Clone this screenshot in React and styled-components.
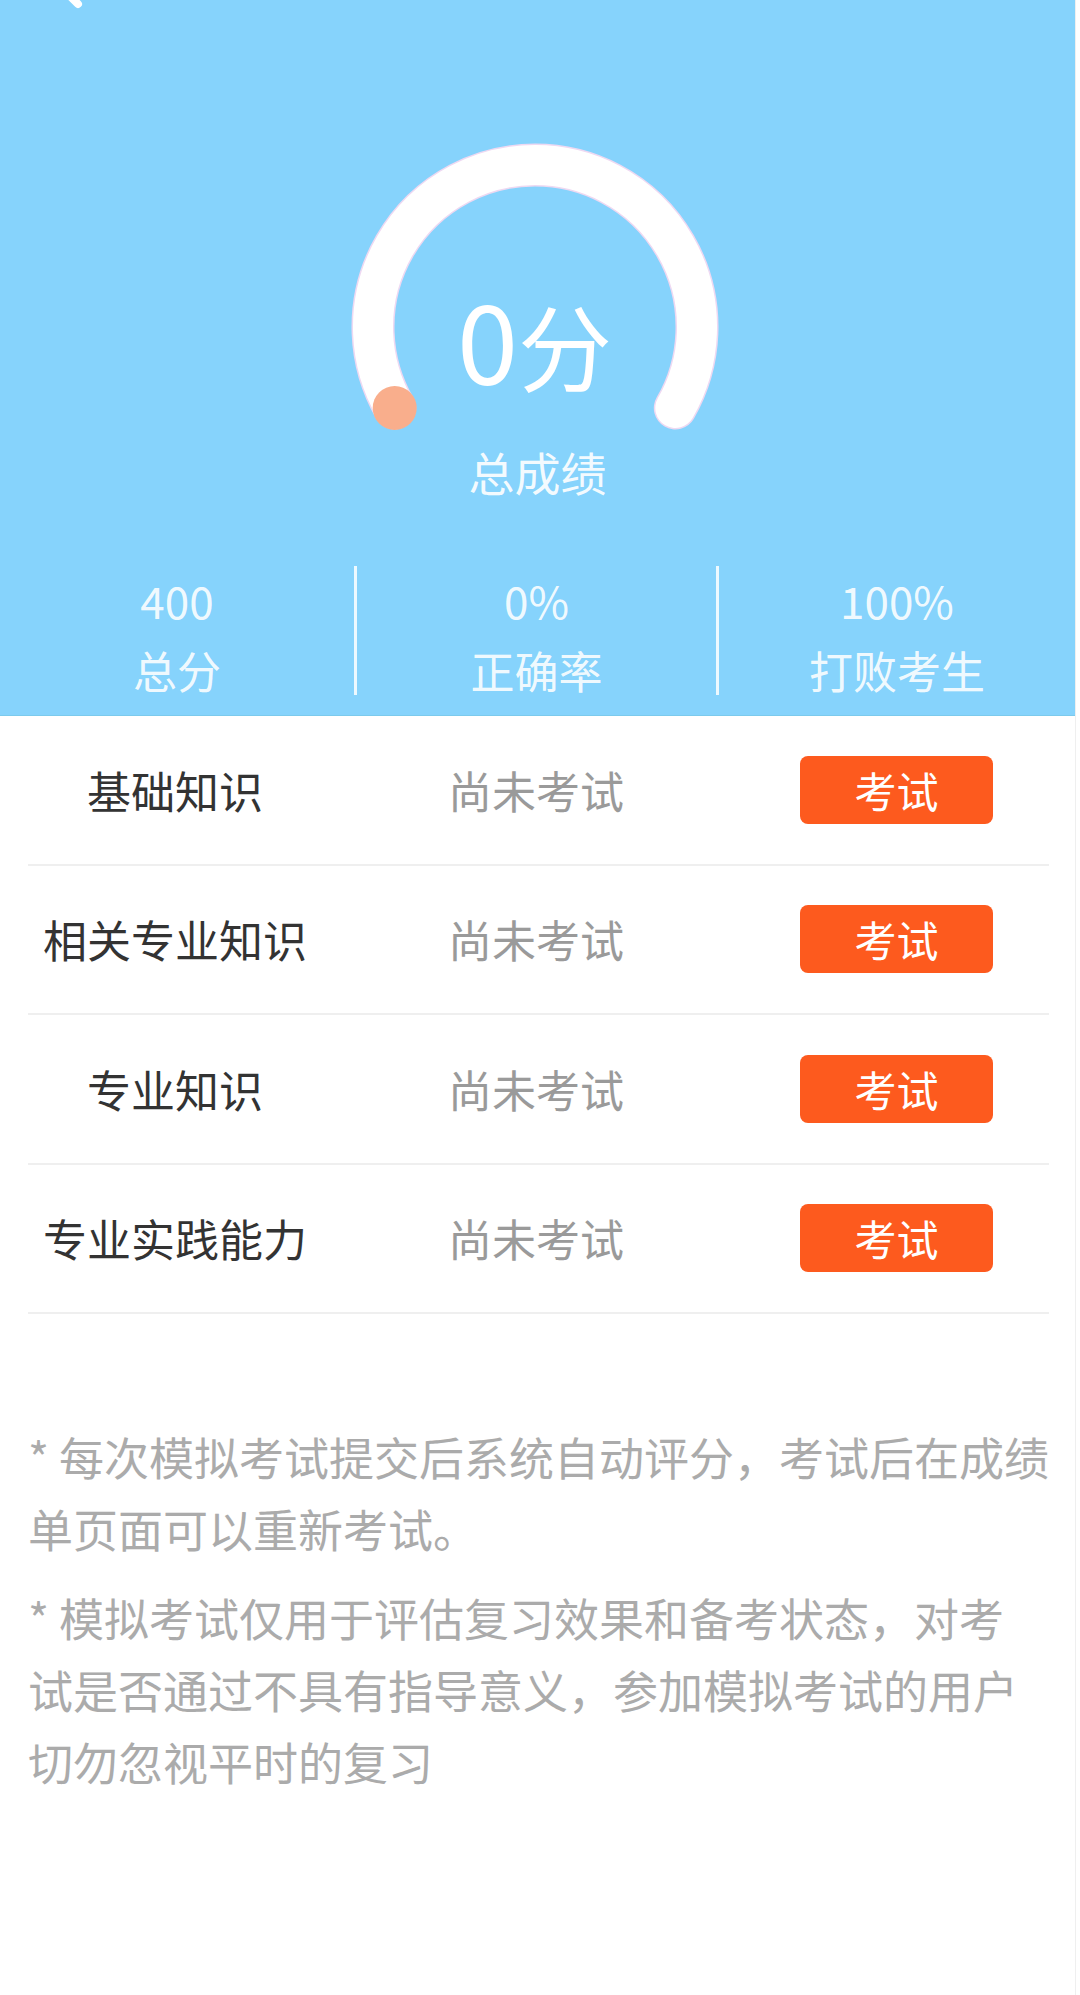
import React from "react";
import styled, { createGlobalStyle } from "styled-components";
import { ChevronLeft } from "lucide-react";

const GlobalStyle = createGlobalStyle`
  * { box-sizing: border-box; }
  body {
    margin: 0;
    background: #ffffff;
    font-family: "Noto Sans CJK SC", "Noto Sans", sans-serif;
  }
`;

const subjects = [
  { name: "基础知识", status: "尚未考试" },
  { name: "相关专业知识", status: "尚未考试" },
  { name: "专业知识", status: "尚未考试" },
  { name: "专业实践能力", status: "尚未考试" },
];

const stats = [
  { value: "400", label: "总分" },
  { value: "0%", label: "正确率" },
  { value: "100%", label: "打败考生" },
];

function Gauge() {
  const cx = 190;
  const cy = 190;
  const r = 162;
  const a0 = (150 * Math.PI) / 180;
  const a1 = (30 * Math.PI) / 180;
  const sx = cx + r * Math.cos(a0);
  const sy = cy + r * Math.sin(a0);
  const ex = cx + r * Math.cos(a1);
  const ey = cy + r * Math.sin(a1);
  const d = `M ${sx} ${sy} A ${r} ${r} 0 1 1 ${ex} ${ey}`;

  return (
    <svg width="380" height="295" viewBox="0 0 380 295">
      <path d={d} fill="none" stroke="#eed9f2" strokeWidth="43" strokeLinecap="round" />
      <path d={d} fill="none" stroke="#ffffff" strokeWidth="40" strokeLinecap="round" />
      <circle cx={sx} cy={sy} r="22" fill="#f9ae8c" />
    </svg>
  );
}

function App() {
  return (
    <>
      <GlobalStyle />
      <Page>
        <Hero>
          <TopBar>
            <ChevronLeft size={64} color="#ffffff" strokeWidth={3} />
          </TopBar>
          <GaugeWrap>
            <Gauge />
            <Score>
              <ScoreNum>0</ScoreNum>
              <ScoreUnit>分</ScoreUnit>
            </Score>
          </GaugeWrap>
          <ScoreLabel>总成绩</ScoreLabel>
          <StatsRow>
            {stats.map((s, i) => (
              <StatCol key={s.label} $first={i === 0}>
                <StatValue>{s.value}</StatValue>
                <StatLabel>{s.label}</StatLabel>
              </StatCol>
            ))}
          </StatsRow>
        </Hero>

        <SubjectList>
          {subjects.map((s) => (
            <SubjectRow key={s.name}>
              <SubjectName>{s.name}</SubjectName>
              <SubjectStatus>{s.status}</SubjectStatus>
              <ButtonCell>
                <ExamButton>考试</ExamButton>
              </ButtonCell>
            </SubjectRow>
          ))}
        </SubjectList>

        <Notes>
          <Note>
            * 每次模拟考试提交后系统自动评分，考试后在成绩
            <br />
            单页面可以重新考试。
          </Note>
          <Note>
            * 模拟考试仅用于评估复习效果和备考状态，对考
            <br />
            试是否通过不具有指导意义，参加模拟考试的用户
            <br />
            切勿忽视平时的复习
          </Note>
        </Notes>
      </Page>
    </>
  );
}

const Page = styled.div`
  width: 1076px;
  min-height: 1995px;
  background: #ffffff;
  border-right: 1px solid #efefef;
  overflow: hidden;
`;

const Hero = styled.div`
  height: 716px;
  background: #86d3fc;
  border-bottom: 1px solid #7ccaec;
  display: flex;
  flex-direction: column;
  align-items: center;
`;

const TopBar = styled.div`
  align-self: stretch;
  height: 100px;
  margin-top: -62px;
  padding-left: 38px;
  display: flex;
  align-items: center;
`;

const GaugeWrap = styled.div`
  position: relative;
  margin-top: 99px;
  width: 380px;
  height: 295px;
  margin-left: -6px;
  svg {
    display: block;
  }
`;

const Score = styled.div`
  position: absolute;
  left: 0;
  right: 0;
  top: 145px;
  display: flex;
  justify-content: center;
  align-items: baseline;
  color: #ffffff;
  line-height: 1;
`;

const ScoreNum = styled.span`
  font-size: 110px;
`;

const ScoreUnit = styled.span`
  font-size: 94px;
`;

const ScoreLabel = styled.div`
  margin-top: 14px;
  font-size: 46px;
  line-height: 50px;
  color: rgba(255, 255, 255, 0.92);
`;

const StatsRow = styled.div`
  margin-top: 64px;
  align-self: stretch;
  display: grid;
  grid-template-columns: 354px 362px 1fr;
  padding: 6px 0 9px;
`;

const StatCol = styled.div`
  display: flex;
  flex-direction: column;
  align-items: center;
  padding-top: 9px;
  gap: 20px;
  border-left: ${(p) => (p.$first ? "none" : "3px solid rgba(255, 255, 255, 0.85)")};
`;

const StatValue = styled.div`
  font-size: 44px;
  line-height: 50px;
  color: rgba(255, 255, 255, 0.9);
`;

const StatLabel = styled.div`
  font-size: 44px;
  line-height: 50px;
  color: rgba(255, 255, 255, 0.9);
`;

const SubjectList = styled.div`
  display: flex;
  flex-direction: column;
`;

const SubjectRow = styled.div`
  margin: 0 26px 0 28px;
  height: 149.5px;
  display: grid;
  grid-template-columns: 294px 428px 1fr;
  align-items: center;
  border-bottom: 2px solid #efefef;
`;

const SubjectName = styled.div`
  text-align: center;
  font-size: 44px;
  color: #333333;
`;

const SubjectStatus = styled.div`
  text-align: center;
  font-size: 44px;
  color: #9a9a9a;
`;

const ButtonCell = styled.div`
  padding-left: 50px;
  display: flex;
`;

const ExamButton = styled.button`
  width: 193px;
  height: 68px;
  border: none;
  border-radius: 8px;
  background: #fd5a1e;
  color: #ffffff;
  font-family: "Noto Sans CJK SC", "Noto Sans", sans-serif;
  font-size: 42px;
  line-height: 68px;
  padding: 0;
`;

const Notes = styled.div`
  margin-top: 107px;
  padding: 0 20px 0 28px;
  display: flex;
  flex-direction: column;
  gap: 17px;
`;

const Note = styled.p`
  margin: 0;
  font-size: 45px;
  line-height: 72px;
  color: #ababab;
  white-space: nowrap;
`;

export default App;
